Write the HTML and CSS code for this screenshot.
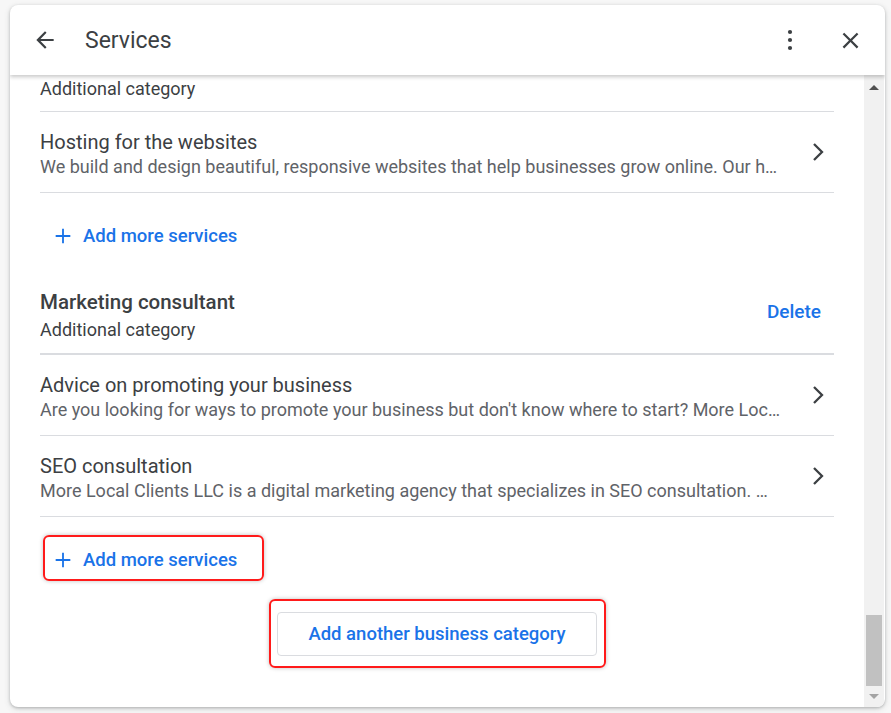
FILE: index.html
```html
<!DOCTYPE html>
<html lang="en">
<head>
    <meta charset="UTF-8">
    <meta name="viewport" content="width=device-width, initial-scale=1.0">
    <title>Services</title>
    <link rel="stylesheet" href="styles.css">
</head>
<body>
    <div class="dialog">
        <header class="dialog-header">
            <button class="icon-btn back-btn" aria-label="Back">
                <svg width="24" height="24" viewBox="0 0 24 24"><path d="M20 11H7.83l5.59-5.59L12 4l-8 8 8 8 1.41-1.41L7.83 13H20v-2z" fill="#3c4043"/></svg>
            </button>
            <h1 class="dialog-title">Services</h1>
            <button class="icon-btn more-btn" aria-label="More">
                <svg width="24" height="24" viewBox="0 0 24 24"><circle cx="12" cy="4" r="2.1" fill="#3c4043"/><circle cx="12" cy="12" r="2.1" fill="#3c4043"/><circle cx="12" cy="20" r="2.1" fill="#3c4043"/></svg>
            </button>
            <button class="icon-btn close-btn" aria-label="Close">
                <svg width="24" height="24" viewBox="0 0 24 24"><path d="M19 6.41 17.59 5 12 10.59 6.41 5 5 6.41 10.59 12 5 17.59 6.41 19 12 13.41 17.59 19 19 17.59 13.41 12z" fill="#3c4043"/></svg>
            </button>
        </header>

        <div class="dialog-body">
            <div class="content">
                <div class="category-tail">Additional category</div>

                <div class="service-row">
                    <div class="service-text">
                        <div class="service-name">Hosting for the websites</div>
                        <div class="service-desc">We build and design beautiful, responsive websites that help businesses grow online. Our h…</div>
                    </div>
                    <svg class="chevron" width="24" height="24" viewBox="0 0 24 24"><polyline points="8,4 16,12 8,20" fill="none" stroke="#3c4043" stroke-width="2.3"/></svg>
                </div>

                <div class="add-wrap">
                    <button class="add-link">
                        <svg width="24" height="24" viewBox="0 0 24 24"><path d="M12 4v16M4 12h16" stroke="#1a73e8" stroke-width="2"/></svg>
                        <span>Add more services</span>
                    </button>
                </div>

                <div class="category-head">
                    <div class="category-info">
                        <div class="category-name">Marketing consultant</div>
                        <div class="category-type">Additional category</div>
                    </div>
                    <button class="delete-btn">Delete</button>
                </div>

                <div class="service-row">
                    <div class="service-text">
                        <div class="service-name">Advice on promoting your business</div>
                        <div class="service-desc">Are you looking for ways to promote your business but don't know where to start? More Loc…</div>
                    </div>
                    <svg class="chevron" width="24" height="24" viewBox="0 0 24 24"><polyline points="8,4 16,12 8,20" fill="none" stroke="#3c4043" stroke-width="2.3"/></svg>
                </div>

                <div class="service-row">
                    <div class="service-text">
                        <div class="service-name">SEO consultation</div>
                        <div class="service-desc">More Local Clients LLC is a digital marketing agency that specializes in SEO consultation. …</div>
                    </div>
                    <svg class="chevron" width="24" height="24" viewBox="0 0 24 24"><polyline points="8,4 16,12 8,20" fill="none" stroke="#3c4043" stroke-width="2.3"/></svg>
                </div>

                <div class="add-wrap">
                    <button class="add-link marked">
                        <svg width="24" height="24" viewBox="0 0 24 24"><path d="M12 4v16M4 12h16" stroke="#1a73e8" stroke-width="2"/></svg>
                        <span>Add more services</span>
                    </button>
                </div>

                <div class="category-btn-wrap">
                    <button class="category-btn marked">Add another business category</button>
                </div>
            </div>

            <div class="scrollbar">
                <div class="scroll-arrow up"></div>
                <div class="scroll-track">
                    <div class="scroll-thumb"></div>
                </div>
                <div class="scroll-arrow down"></div>
            </div>
        </div>
    </div>
</body>
</html>
```

FILE: styles.css
```css
body {
    margin: 0;
    padding: 5px 6px 6px 10px;
    background-color: #f7f7f7;
    font-family: Roboto, 'Noto Sans', Arial, sans-serif;
    color: #3c4043;
}

button {
    font-family: inherit;
    background: none;
    border: none;
    padding: 0;
    cursor: pointer;
}

.dialog {
    width: 875px;
    height: 702px;
    background-color: #ffffff;
    border-radius: 8px;
    box-shadow: 0 1px 3px rgba(60, 64, 67, 0.3), 0 2px 6px rgba(60, 64, 67, 0.15);
    display: flex;
    flex-direction: column;
    overflow: hidden;
}

/* Cabeçalho */
.dialog-header {
    height: 70px;
    flex-shrink: 0;
    display: flex;
    align-items: center;
    padding: 0 23px 0 23px;
    box-shadow: 0 2px 4px rgba(0, 0, 0, 0.22);
    position: relative;
    z-index: 1;
}

.icon-btn {
    width: 24px;
    height: 24px;
    display: flex;
}

.back-btn svg {
    width: 26px;
    height: 26px;
    margin: -1px;
}

.dialog-title {
    margin: 0 0 0 28px;
    font-size: 23px;
    font-weight: 400;
    color: #3c4043;
    flex: 1;
}

.more-btn {
    margin-right: 36px;
}

.close-btn svg {
    width: 27px;
    height: 27px;
    margin: -1.5px;
}

/* Corpo com rolagem */
.dialog-body {
    flex: 1;
    display: flex;
    min-height: 0;
}

.content {
    flex: 1;
    padding: 2px 30px 0 30px;
    overflow: hidden;
}

.category-tail {
    font-size: 18px;
    line-height: 24px;
    padding-bottom: 10px;
    border-bottom: 1px solid #dadce0;
}

.service-row {
    display: flex;
    align-items: center;
    height: 80px;
    border-bottom: 1px solid #dadce0;
    box-sizing: content-box;
}

.service-text {
    flex: 1;
    min-width: 0;
    padding-top: 6px;
    margin-right: 16px;
}

.service-name {
    font-size: 20px;
    line-height: 24px;
    color: #3c4043;
}

.service-desc {
    font-size: 18px;
    line-height: 26px;
    color: #5f6368;
    white-space: nowrap;
    overflow: hidden;
    text-overflow: ellipsis;
}

.chevron {
    flex-shrink: 0;
    margin-right: 4px;
}

.add-wrap {
    padding-top: 19px;
}

.add-link {
    display: inline-flex;
    align-items: center;
    height: 48px;
    padding: 0 12px 0 10px;
    gap: 9px;
    color: #1a73e8;
    font-size: 18.5px;
    font-weight: 500;
    position: relative;
}

.add-link svg {
    width: 22px;
    height: 22px;
    margin-left: 2px;
}

.category-head {
    display: flex;
    padding-top: 30px;
    padding-bottom: 11px;
    border-bottom: 2px solid #dadce0;
}

.category-info {
    flex: 1;
}

.category-name {
    font-size: 20.5px;
    font-weight: 500;
    line-height: 24px;
}

.category-type {
    font-size: 18px;
    line-height: 24px;
    margin-top: 4px;
}

.delete-btn {
    align-self: flex-start;
    margin-top: 9px;
    margin-right: 13px;
    height: 24px;
    color: #1a73e8;
    font-size: 19px;
    font-weight: 500;
}

.category-btn-wrap {
    display: flex;
    justify-content: center;
    padding-top: 28px;
}

.category-btn {
    width: 320px;
    height: 44px;
    border: 1px solid #dadce0;
    border-radius: 4px;
    color: #1a73e8;
    font-size: 18.5px;
    font-weight: 500;
    position: relative;
}

/* Marcações vermelhas do print */
.marked::after {
    content: "";
    position: absolute;
    border: 2px solid #ff1a1a;
    border-radius: 6px;
    box-shadow: 0 0 4px rgba(0, 0, 0, 0.25);
    pointer-events: none;
}

.add-link.marked::after {
    top: -1px;
    bottom: 3px;
    left: 3px;
    right: -15px;
}

.category-btn.marked::after {
    top: -14px;
    bottom: -13px;
    left: -9px;
    right: -10px;
}

/* Barra de rolagem */
.scrollbar {
    width: 20px;
    margin-right: 1px;
    background-color: #f1f1f1;
    display: flex;
    flex-direction: column;
}

.scroll-arrow {
    height: 20px;
    display: flex;
    justify-content: center;
    align-items: center;
}

.scroll-arrow.up::before,
.scroll-arrow.down::before {
    content: "";
    width: 0;
    height: 0;
    border-left: 5px solid transparent;
    border-right: 5px solid transparent;
}

.scroll-arrow.up::before {
    border-bottom: 5px solid #505050;
    margin-top: 4px;
}

.scroll-arrow.down::before {
    border-top: 5px solid #a3a3a3;
    margin-bottom: 2px;
}

.scroll-track {
    flex: 1;
    display: flex;
    flex-direction: column;
    justify-content: flex-end;
    padding: 0 2px 1px 2px;
}

.scroll-thumb {
    height: 71px;
    background-color: #c1c1c1;
}
```
